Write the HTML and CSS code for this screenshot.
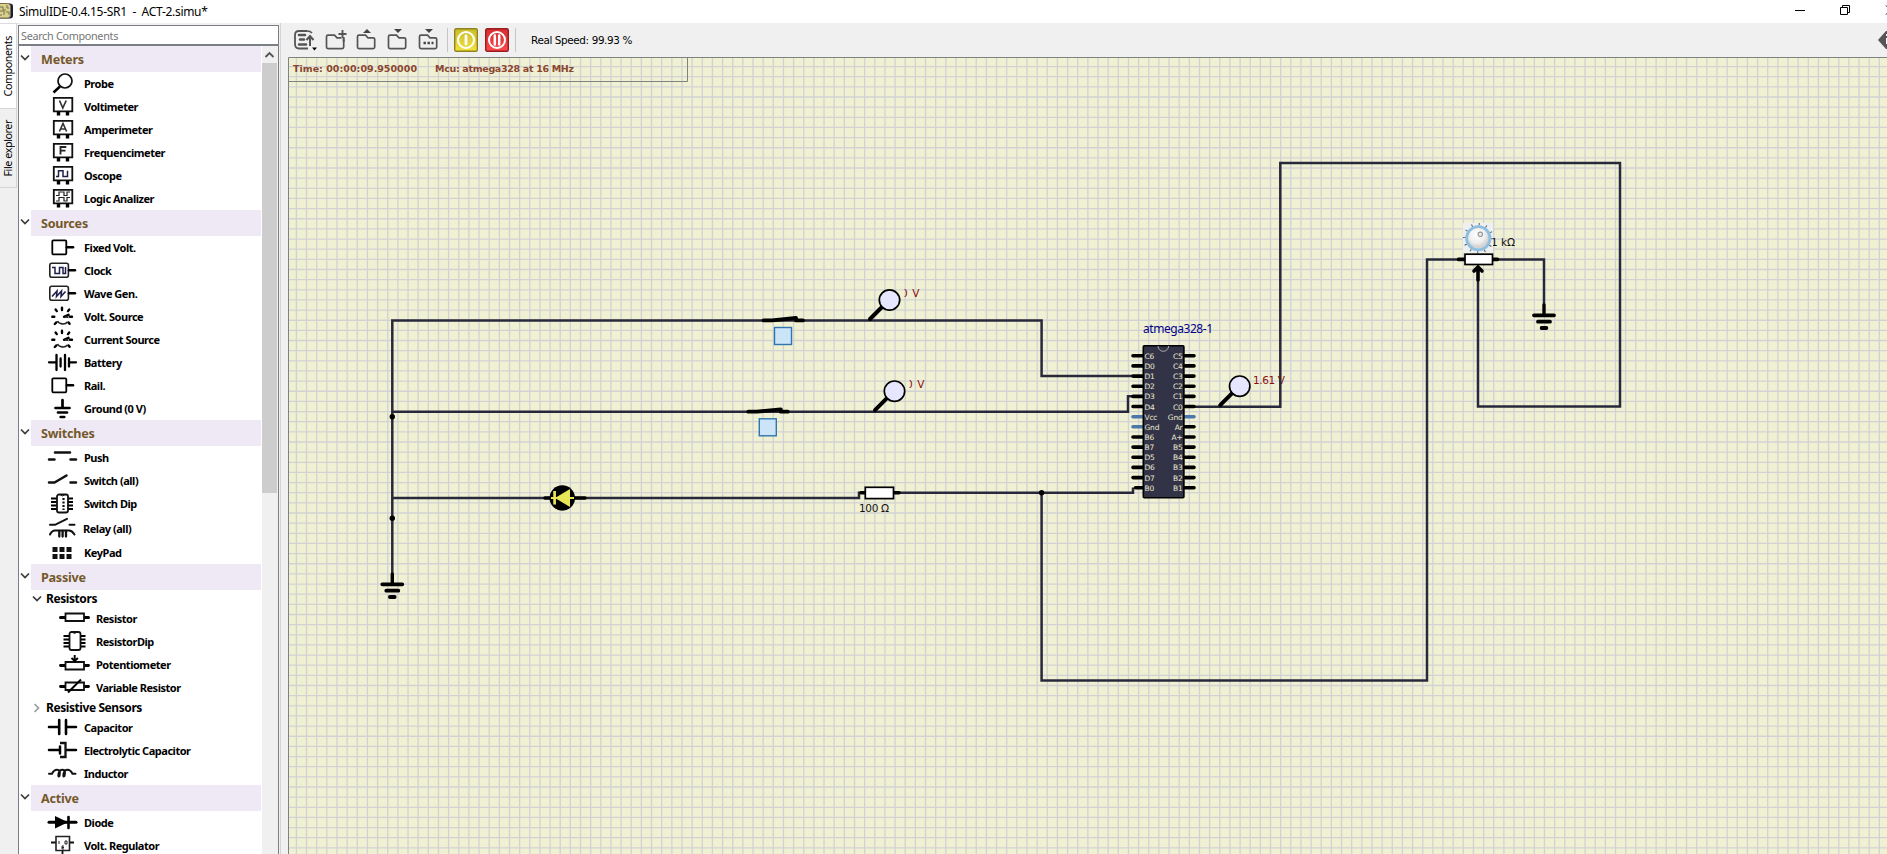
FILE: index.html
```html
<!DOCTYPE html>
<html lang="en">
<head>
<meta charset="utf-8">
<title>SimulIDE-0.4.15-SR1 - ACT-2.simu*</title>
<link rel="stylesheet" href="styles.css">
</head>
<body>
<svg class="defs" width="0" height="0">
  <defs>
    <symbol id="meter" viewBox="0 0 32 23"><path d="M6.8 2.8h18.5v13.6H6.8z" fill="#fff" stroke="#111" stroke-width="1.8"/><path d="M11.5 16.5v4M20.5 16.5v4" stroke="#000" stroke-width="3.4"/></symbol>
    <symbol id="box" viewBox="0 0 32 23"><rect x="5.3" y="4.3" width="14" height="14" rx="1" fill="#fff" stroke="#000" stroke-width="1.8"/><path d="M20 11.3h6" stroke="#000" stroke-width="2.6" stroke-linecap="round"/></symbol>
    <symbol id="widebox" viewBox="0 0 32 23"><rect x="2.8" y="4.3" width="18.6" height="14" rx="2" fill="#fff" stroke="#222" stroke-width="1.6"/><path d="M22 11.3h6" stroke="#000" stroke-width="2.4" stroke-linecap="round"/></symbol>
    <symbol id="dial" viewBox="0 0 32 23"><path d="M15 2.8v2.2M8.600 4.500l1.200 1.600M22.200 4.500l-1.200 1.600M5.300 11.800h2M23 11.800h2M7.800 19l1.600-1.600M22.600 18.800l-1.200-1.400M17 11.800l4.500-2" stroke="#000" stroke-width="2.400" stroke-linecap="round"/><path d="M10.500 16c1.600 3.400 7.500 4 10 1M18 11.600l3.500.8" fill="none" stroke="#222" stroke-width="1.600"/></symbol>
    <symbol id="down" viewBox="0 0 10 8"><path d="M1 1.5l4 4 4-4" fill="none" stroke="#3c3c3c" stroke-width="1.7"/></symbol>
    <symbol id="folder" viewBox="0 0 22 22"><path d="M4.5 6.2h5l2.5 2.6h5.2q1.5 0 1.5 1.5v7.8q0 1.5-1.5 1.5H3q-1.5 0-1.5-1.5V7.7q0-1.5 1.5-1.5z" fill="none" stroke="#555" stroke-width="1.7"/></symbol>
    <symbol id="ground" viewBox="0 0 28 28"><path d="M14 2v10" stroke="#000" stroke-width="3.4" stroke-linecap="round"/><path d="M4 12.3h20M8 18.7h12M11.6 25h4.8" stroke="#000" stroke-width="3.8" stroke-linecap="round"/></symbol>
    <linearGradient id="gold" x2="0" y2="1"><stop stop-color="#c9bd2c"/><stop offset="1" stop-color="#f3e33f"/></linearGradient>
    <linearGradient id="red" x2="0" y2="1"><stop stop-color="#d42d31"/><stop offset="1" stop-color="#fb4a4c"/></linearGradient>
    <radialGradient id="ball" cx=".45" cy=".35"><stop stop-color="#fff"/><stop offset=".7" stop-color="#eee"/><stop offset="1" stop-color="#d4d4d4"/></radialGradient>
  </defs>
</svg>

<header class="titlebar">
  <svg class="logo" width="14" height="16" viewBox="0 0 14 16"><rect x="-5" y=".5" width="18" height="15" rx="3" fill="#1b1b42"/><rect x="-5" y=".5" width="15.5" height="14.5" rx="3" fill="#d9d090" stroke="#777044"/><path d="M0 4h3v3h3M0 8h4v4M7 2v3h2M0 12h2M6 9h3v3" fill="none" stroke="#77704a"/></svg>
  <span class="title">SimulIDE-0.4.15-SR1&nbsp; -&nbsp; ACT-2.simu*</span>
  <svg class="window-buttons" width="92" height="23" viewBox="0 0 92 23"><path d="M0 10.5h10M45.500 7.500h7v7h-7zM47.500 7.500v-2h7v7h-2M91 5.500l8 8M91 14.500l6-6" fill="none" stroke="#000"/></svg>
</header>

<div class="workspace">
  <nav class="tabs">
    <div class="tab active"><span>Components</span></div>
    <div class="tab"><span>File explorer</span></div>
  </nav>

  <aside class="sidebar">
    <div class="search">Search Components</div>
    <div class="panel">
      <div class="tree">
        <div class="section"><svg class="arrow"><use href="#down"/></svg><h2>Meters</h2></div>
        <div class="item"><svg class="icon"><circle cx="18" cy="9" r="7" fill="#fff" stroke="#111" stroke-width="1.7"/><path d="M13 14.500l-6.500 6" stroke="#000" stroke-width="2.600"/></svg>Probe</div>
        <div class="item"><svg class="icon"><use href="#meter"/><path d="M12.500 5.500l3.300 7.500 3.400-7.500" fill="none" stroke="#333" stroke-width="1.700"/></svg>Voltimeter</div>
        <div class="item"><svg class="icon"><use href="#meter"/><path d="M12.400 13.500l3.600-8 3.600 8M13.700 11h4.700" fill="none" stroke="#333" stroke-width="1.600"/></svg>Amperimeter</div>
        <div class="item"><svg class="icon"><use href="#meter"/><path d="M13.500 13.500V6h5.800M13.500 9.600h5" fill="none" stroke="#222" stroke-width="1.800"/></svg>Frequencimeter</div>
        <div class="item"><svg class="icon"><use href="#meter"/><path d="M9 12.500h2.500V6.700h4.500v5.800h4.500V6.700" fill="none" stroke="#1f1f4c" stroke-width="1.500"/></svg>Oscope</div>
        <div class="item"><svg class="icon"><use href="#meter"/><path d="M9 8.500h3V5h5v3.500h3V5h3M9 14h3v-3.500h5V14h3v-3.500h3" fill="none" stroke="#222" stroke-width="1.200"/></svg>Logic Analizer</div>

        <div class="section"><svg class="arrow"><use href="#down"/></svg><h2>Sources</h2></div>
        <div class="item"><svg class="icon"><use href="#box"/></svg>Fixed Volt.</div>
        <div class="item"><svg class="icon"><use href="#widebox"/><path d="M5 8.500h3v6h4.500v-6H16v6h2.500V8" fill="none" stroke="#1f1f4c" stroke-width="1.500"/></svg>Clock</div>
        <div class="item"><svg class="icon"><use href="#widebox"/><path d="M5 14.500l5-5.500-.5 5.500 5-5.500-.5 5.500 4.500-5" fill="none" stroke="#1f1f4c" stroke-width="1.600"/></svg>Wave Gen.</div>
        <div class="item"><svg class="icon"><use href="#dial"/></svg>Volt. Source</div>
        <div class="item"><svg class="icon"><use href="#dial"/></svg>Current Source</div>
        <div class="item"><svg class="icon"><path d="M2 11.300h7M22 11.300h7M9.500 4v15M13.600 7.500v8M18 4v15M22 7.500v8" stroke="#000" stroke-width="2.300" stroke-linecap="round"/></svg>Battery</div>
        <div class="item"><svg class="icon"><use href="#box"/></svg>Rail.</div>
        <div class="item"><svg class="icon"><path d="M15.500 3v7M8.500 11h14M11 15.500h9M13.700 20h3.500" stroke="#000" stroke-width="2.700" stroke-linecap="round"/></svg>Ground (0 V)</div>

        <div class="section"><svg class="arrow"><use href="#down"/></svg><h2>Switches</h2></div>
        <div class="item"><svg class="icon"><path d="M8 6.500h15M2 13.500h5.500M23.500 13.500h5.500" stroke="#111" stroke-width="2.500" stroke-linecap="round"/></svg>Push</div>
        <div class="item"><svg class="icon"><path d="M2 13.500h5.500l12-7M23.500 13.500h5.500" fill="none" stroke="#111" stroke-width="2.500" stroke-linecap="round"/></svg>Switch (all)</div>
        <div class="item"><svg class="icon"><path d="M4 6.500h6M4 10h6M4 13.500h6M4 17h6M21 6.500h5M21 10h5M21 13.500h5M21 17h5" stroke="#000" stroke-width="1.900"/><rect x="10" y="2.500" width="11" height="18" rx="2" fill="#fff" stroke="#111" stroke-width="1.800"/><path d="M13 2.500q2.500 3 5 0" fill="none" stroke="#111"/><path d="M16.500 6v12" stroke="#111" stroke-width="2.200" stroke-dasharray="2 1.500"/></svg>Switch Dip</div>
        <div class="item relay"><svg class="icon relay-icon"><path d="M3 9.800h5l12-6M22.500 9.800h5M3 19.500q2-4 5-4h14q3 0 5.500 4" fill="none" stroke="#111" stroke-width="2" stroke-linecap="round"/><path d="M12.300 16v5.500M15.600 16v5.500M19 16v5.500" stroke="#111" stroke-width="2.300" stroke-linecap="round"/></svg>Relay (all)</div>
        <div class="item keypad"><svg class="icon"><path d="M5.500 7.500h20M5.500 14.500h20" stroke="#111" stroke-width="5" stroke-dasharray="5 2"/></svg>KeyPad</div>

        <div class="section"><svg class="arrow"><use href="#down"/></svg><h2>Passive</h2></div>
        <div class="subsection"><svg class="arrow"><use href="#down"/></svg>Resistors</div>
        <div class="item nested"><svg class="icon"><path d="M1.500 10.500h28" stroke="#000" stroke-width="3" stroke-linecap="round"/><path d="M6.500 6.500h18.500v7.500H6.500z" fill="#fff" stroke="#111" stroke-width="1.800"/></svg>Resistor</div>
        <div class="item nested"><svg class="icon"><path d="M4.500 6h6M4.500 9.500h6M4.500 13h6M4.500 16.500h6M21.500 6h5M21.500 9.500h5M21.500 13h5M21.500 16.500h5" stroke="#000" stroke-width="1.900"/><rect x="10.500" y="2" width="11" height="18" rx="2" fill="#fff" stroke="#111" stroke-width="1.800"/><path d="M13 2q2.500 3 5 0" fill="none" stroke="#111"/></svg>ResistorDip</div>
        <div class="item nested"><svg class="icon"><path d="M1.500 12.500h28" stroke="#000" stroke-width="2.800" stroke-linecap="round"/><path d="M6.500 9h18.500v7.500H6.500z" fill="#fff" stroke="#111" stroke-width="1.800"/><path d="M15.700 2v5.500M12.500 5l3.200 3 3.200-3" fill="none" stroke="#000" stroke-width="1.900"/></svg>Potentiometer</div>
        <div class="item nested"><svg class="icon"><path d="M1.500 10.500h28" stroke="#000" stroke-width="2.800" stroke-linecap="round"/><path d="M6.500 6.500h18.500v7.500H6.500z" fill="#fff" stroke="#111" stroke-width="1.800"/><path d="M9 16.500L22 3.500" stroke="#000" stroke-width="2"/></svg>Variable Resistor</div>
        <div class="subsection"><svg class="arrow closed"><use href="#down"/></svg>Resistive Sensors</div>
        <div class="item"><svg class="icon"><path d="M2 11h10M20 11h9M12.200 4v14M19 4v14" stroke="#000" stroke-width="2.600" stroke-linecap="round"/></svg>Capacitor</div>
        <div class="item"><svg class="icon"><path d="M2 11h10M19.500 11H29M13 7.500v7" stroke="#000" stroke-width="2.500" stroke-linecap="round"/><path d="M13 4h5.500v14H13" fill="none" stroke="#111" stroke-width="2.300"/></svg>Electrolytic Capacitor</div>
        <div class="item"><svg class="icon"><path d="M2 11.800h3q2-4 5-4 4 0 2.500 6-1.500 2-1-2 1-4 4-4 3.500 0 2 6-1.500 2-1-2 1-4 4-4 3 0 5 4h3" fill="none" stroke="#111" stroke-width="2" stroke-linecap="round"/></svg>Inductor</div>

        <div class="section"><svg class="arrow"><use href="#down"/></svg><h2>Active</h2></div>
        <div class="item"><svg class="icon"><path d="M2 11.300h27" stroke="#000" stroke-width="3" stroke-linecap="round"/><path d="M8 5l13 6.300L8 17.600z"/><path d="M21.500 6v11" stroke="#000" stroke-width="2.600" stroke-linecap="round"/></svg>Diode</div>
        <div class="item"><svg class="icon"><path d="M4 8.500h5M22 8.500h5M15.500 17v6" stroke="#111" stroke-width="1.800"/><path d="M9 2.500h13.500v14H9z" fill="#fff" stroke="#222" stroke-width="1.600"/><path d="M12 7v3M18 7h2v3h-2zM17 12h-2v3h2M15 13.500h2" fill="none" stroke="#222"/></svg>Volt. Regulator</div>
      </div>
      <div class="scrollbar"><svg class="scroll-up" viewBox="0 0 15 17"><path d="M3.500 11L7.500 7l4 4" fill="none" stroke="#555" stroke-width="1.800"/></svg><div class="thumb"></div></div>
    </div>
  </aside>

  <main class="editor">
    <div class="toolbar">
      <svg class="tool" viewBox="0 0 22 22"><path d="M13 2H5Q1 2 1 6v9q0 4.500 4 4.500h9" fill="none" stroke="#555" stroke-width="1.800"/><path d="M13 2q3.500 0 5 2" fill="none" stroke="#555" stroke-width="1.500"/><path d="M5 6h6M6 10.500h4M5 15.500h7" stroke="#555" stroke-width="2.600" stroke-linecap="round"/><path d="M16 17V8M12.500 11L16 7l3.500 4" fill="none" stroke="#555" stroke-width="2"/><path d="M18 18.500h5l-2.500 3z"/></svg>
      <svg class="tool" viewBox="0 0 22 22"><use href="#folder"/><path d="M12 0h10v10H17z" fill="#f0f0f0"/><path d="M17.500 1v8M13.500 5h8M18.700 8v5" stroke="#555" stroke-width="1.900"/></svg>
      <svg class="tool" viewBox="0 0 22 22"><use href="#folder"/><path d="M7 4l4-4 4 4z" fill="#444"/></svg>
      <svg class="tool" viewBox="0 0 22 22"><use href="#folder"/><path d="M7 0h8l-4 4z" fill="#444"/></svg>
      <svg class="tool" viewBox="0 0 22 22"><use href="#folder"/><path d="M7 0h8l-4 4z" fill="#444"/><path d="M5.500 14h10" stroke="#444" stroke-width="2.400" stroke-dasharray="2.400 1.600"/></svg>
      <i class="divider"></i>
      <svg class="power" viewBox="0 0 24 24"><rect x=".7" y=".7" width="22.600" height="22.600" rx="1.500" fill="url(#gold)" stroke="#8f8420" stroke-width="1.400"/><circle cx="12" cy="12" r="8" fill="none" stroke="#fff" stroke-width="2"/><path d="M12 8v8" stroke="#fff" stroke-width="2.800" stroke-linecap="round"/></svg>
      <svg class="power" viewBox="0 0 24 24"><rect x=".7" y=".7" width="22.600" height="22.600" rx="1.500" fill="url(#red)" stroke="#991c20" stroke-width="1.400"/><circle cx="12" cy="12" r="8" fill="none" stroke="#fff" stroke-width="2"/><path d="M9.800 7.500v9M14.200 7.500v9" stroke="#fff" stroke-width="2.500" stroke-linecap="round"/></svg>
      <i class="divider last"></i>
      <span class="speed">Real Speed: 99.93 %</span>
      <svg class="info" width="9" height="20" viewBox="0 0 9 20"><path d="M0 10l8-9h1v18H8z" fill="#555"/><path d="M8.500 4v2M8.500 8v6" stroke="#fff"/></svg>
    </div>

    <svg class="circuit" viewBox="288 57 1599 797">
      <rect x="288" y="57" width="1599" height="797" fill="#f0f0d2"/>
      <!-- one very wide dashed stroke per direction draws the grid -->
      <g stroke="#d2d2d5" fill="none">
        <path d="M286.900 455.500H1900" stroke-width="800" stroke-dasharray="1.300 8.847" stroke-dashoffset="1.300"/>
        <path d="M1087.500 65.900V860" stroke-width="1600" stroke-dasharray="1.300 8.847"/>
      </g>
      <path d="M288.500 854V57.500H1887M288 81.500H687.500V57" fill="none" stroke="#7d8480"/>
      <g class="status"><text x="293" y="72" textLength="124">Time: 00:00:09.950000</text><text x="435" y="72" textLength="139">Mcu: atmega328 at 16 MHz</text></g>

      <clipPath id="reading"><path d="M904.500 280h30v25h-30z"/></clipPath>
      <g class="label red"><g id="zero" clip-path="url(#reading)"><text x="901" y="297" textLength="18.500">0 V</text></g><use href="#zero" x="5" y="91.200"/><text x="1253" y="383.500" textLength="32">1.61 V</text></g>

      <g class="wires">
        <path d="M392.300 575V320.400H1041.600V376H1132M392.300 411.800H1128V396.300H1132M392.300 498H859V492.800H1133V487.500M1041.600 492.800V680.500H1427V259.400H1544V305M1195 406.700H1280.300V163H1620V406.500H1478V280"/>
      </g>
      <g><circle cx="392.300" cy="416.700" r="2.700"/><circle cx="392.300" cy="518.300" r="2.700"/><circle cx="1041.600" cy="492.800" r="2.700"/></g>
      <use href="#ground" x="378.300" y="572" width="28" height="28"/>
      <use href="#ground" x="1530" y="303" width="28" height="28"/>

      <g id="switch1"><path d="M763.500 320.400h8.500l24-2.400v2.400h7" fill="none" stroke="#000" stroke-width="3.800" stroke-linecap="round" stroke-linejoin="round"/><rect x="774.500" y="327.500" width="17" height="17" fill="#cce4f7" stroke="#2f75b0" stroke-width="1.400"/></g>
      <use href="#switch1" x="-15.200" y="91.300"/>

      <g id="probe1"><path d="M882 307l-12 12" stroke="#000" stroke-width="4" stroke-linecap="round"/><circle cx="889.500" cy="300" r="10.200" fill="#e6e6ff" stroke="#000" stroke-width="1.700"/></g>
      <use href="#probe1" x="5" y="91.200"/>
      <use href="#probe1" x="350.200" y="86.200"/>

      <path d="M545 498h40" stroke="#000" stroke-width="3.600" stroke-linecap="round"/>
      <circle cx="562.300" cy="498" r="12.700"/>
      <path d="M551 498h23" stroke="#e8e557" stroke-width="2"/><path d="M570 489v18l-15-9z" fill="#e8e557"/><path d="M554.600 491v13.500" stroke="#e8e557" stroke-width="2.700"/>

      <path d="M861 492.800h38" stroke="#000" stroke-width="3.600" stroke-linecap="round"/><rect x="865.300" y="487.300" width="28.200" height="11.300" fill="#fff" stroke="#000" stroke-width="1.700"/>
      <g class="label"><text x="859" y="512" textLength="30">100 Ω</text><text x="1491" y="246" textLength="24">1 kΩ</text></g>

      <rect x="1463" y="223" width="30" height="30" fill="#eeefef"/>
      <circle cx="1478.300" cy="238.300" r="14" fill="none" stroke="#56616b" stroke-width="2.800" stroke-dasharray="1 6.330"/>
      <circle cx="1478.300" cy="238.300" r="11.700" fill="url(#ball)" stroke="#8fbfe0" stroke-width="2.800"/>
      <circle cx="1480.300" cy="234.300" r="2.200" fill="#eee" stroke="#999" stroke-width="1.200"/>
      <path d="M1458.500 259.400h39" stroke="#000" stroke-width="3.600" stroke-linecap="round"/><rect x="1465" y="254.200" width="27.500" height="10.300" fill="#fff" stroke="#000" stroke-width="1.700"/>
      <path d="M1478 280v-12M1474 271l4-4 4 4" fill="none" stroke="#000" stroke-width="3.600" stroke-linecap="round"/>

      <g stroke="#000" stroke-width="3.600" stroke-linecap="round">
        <path d="M1133 355.800h10M1133 365.900h10M1133 376.100h10M1133 386.200h10M1133 396.400h10M1133 406.500h10M1133 437h10M1133 447.100h10M1133 457.300h10M1133 467.400h10M1133 477.600h10M1135.500 487.700h8M1185 355.800h9M1185 365.900h9M1185 376.100h9M1185 386.200h9M1185 396.400h9M1185 406.500h9M1185 426.800h9M1185 437h9M1185 447.100h9M1185 457.300h9M1185 467.400h9M1185 477.600h9M1185 487.700h9"/>
        <path d="M1133 416.700h10M1133 426.800h10M1185 416.700h9" stroke="#4a78aa"/>
      </g>
      <rect x="1143.300" y="345.800" width="40.600" height="152" rx="1" fill="#333348" stroke="#000" stroke-width="1.600"/>
      <path d="M1158 346a5.300 5.300 0 0 0 10.600 0" fill="none" stroke="#aaa"/>
      <g class="pins">
        <text x="1144.500" y="358.500">C6</text><text x="1144.500" y="369">D0</text><text x="1144.500" y="379">D1</text><text x="1144.500" y="389">D2</text><text x="1144.500" y="399">D3</text><text x="1144.500" y="409.500">D4</text><text x="1144.500" y="419.500">Vcc</text><text x="1144.500" y="429.500">Gnd</text><text x="1144.500" y="440">B6</text><text x="1144.500" y="450">B7</text><text x="1144.500" y="460">D5</text><text x="1144.500" y="470">D6</text><text x="1144.500" y="480.500">D7</text><text x="1144.500" y="490.500">B0</text>
      </g>
      <g class="pins right">
        <text x="1182.500" y="358.500">C5</text><text x="1182.500" y="369">C4</text><text x="1182.500" y="379">C3</text><text x="1182.500" y="389">C2</text><text x="1182.500" y="399">C1</text><text x="1182.500" y="409.500">C0</text><text x="1182.500" y="419.500">Gnd</text><text x="1182.500" y="429.500">Ar</text><text x="1182.500" y="440">A+</text><text x="1182.500" y="450">B5</text><text x="1182.500" y="460">B4</text><text x="1182.500" y="470">B3</text><text x="1182.500" y="480.500">B2</text><text x="1182.500" y="490.500">B1</text>
      </g>
      <text class="chip-name" x="1143" y="333" textLength="70">atmega328-1</text>
    </svg>
  </main>
</div>
</body>
</html>
```
FILE: styles.css
```css
* { box-sizing: border-box; }
body {
  margin: 0;
  height: 854px;
  overflow: hidden;
  display: flex;
  flex-direction: column;
  background: #f0f0f0;
  color: #000;
  font-family: "Noto Sans", "Open Sans", sans-serif;
}
svg { display: block; flex: none; }
.defs { position: absolute; }

.titlebar { flex: none; height: 23px; display: flex; align-items: center; background: #fff; }
.logo { margin-bottom: 2px; }
.title { margin: 0 auto 0 5px; font-size: 12px; letter-spacing: -.3px; line-height: 23px; white-space: nowrap; }

.workspace { flex: 1; min-height: 0; display: flex; }
.tabs { width: 18px; flex: none; border-top: 1px solid #dcdcdc; }
.tab {
  width: 17px;
  height: 79px;
  display: flex;
  align-items: center;
  justify-content: center;
  border: solid #d5d5d5;
  border-width: 0 1px 1px 0;
  font-size: 10.700px;
  letter-spacing: -.4px;
}
.tab span { writing-mode: vertical-rl; transform: rotate(180deg); line-height: 15px; white-space: nowrap; }
.tab.active { height: 85px; background: #fff; }

.sidebar { width: 263px; flex: none; padding: 2px 1px 0 0; border-right: 1px solid #d4d4d4; display: flex; flex-direction: column; }
.search {
  height: 20px;
  flex: none;
  border: 1px solid #7a7f85;
  background: #fff;
  color: #767676;
  font-size: 10.800px;
  letter-spacing: -.3px;
  line-height: 19px;
  padding-left: 2px;
}
.panel { flex: 1; min-height: 0; display: flex; border: solid #7a7f85; border-width: 1px 1px 0; background: #fff; }
.tree { flex: 1; min-width: 0; overflow: hidden; }
.section { height: 26px; display: flex; align-items: center; gap: 1px; }
.arrow { width: 10px; height: 8px; margin: 0 0 3px 1px; }
.section h2 {
  width: 230px;
  height: 26px;
  margin: 0;
  padding: 1px 0 0 10px;
  background: #efe9f5;
  color: #75592b;
  font-size: 12.600px;
  letter-spacing: -.25px;
  line-height: 26px;
}
.item {
  height: 23px;
  padding-left: 28px;
  display: flex;
  gap: 5px;
  font-size: 11px;
  font-weight: 700;
  letter-spacing: -.47px;
  line-height: 24px;
  white-space: nowrap;
}
.icon { width: 32px; height: 23px; overflow: visible; }
.icon use { width: 32px; height: 23px; }
.nested { padding-left: 40px; }
.relay { height: 27px; line-height: 28px; gap: 4px; }
.relay-icon { height: 27px; }
.keypad { height: 22px; line-height: 22px; }
.subsection { height: 17px; padding-left: 12px; display: flex; align-items: center; gap: 4px; font-size: 12px; font-weight: 700; letter-spacing: -.42px; white-space: nowrap; }
.subsection .arrow { margin-bottom: 0; }
.closed { transform: rotate(-90deg); opacity: .5; }

.scrollbar { width: 16px; flex: none; background: #f0f0f0; }
.scroll-up { width: 15px; height: 17px; }
.thumb { width: 15px; height: 430px; background: #cdcdcd; }

.editor { flex: 1; min-width: 0; display: flex; flex-direction: column; }
.toolbar { height: 34px; flex: none; display: flex; align-items: center; padding-left: 13px; }
.tool { width: 22px; height: 22px; margin-right: 9px; overflow: visible; }
.divider { width: 1px; height: 24px; background: #c6c6c6; margin: 0 6px 0 -2px; }
.power { width: 24px; height: 24px; margin-right: 7px; }
.divider.last { margin: 0 15px 0 -1px; }
.speed { margin-right: auto; font: 10.400px "DejaVu Sans", sans-serif; letter-spacing: -.37px; white-space: nowrap; }
.circuit { width: 1599px; height: 797px; margin-left: 7px; }

.status { font: 700 9.500px "DejaVu Sans", sans-serif; fill: #8a452e; }
.wires { fill: none; stroke: #28283c; stroke-width: 2.500; }
.label { font: 10.500px "DejaVu Sans", sans-serif; fill: #111; }
.label.red { fill: #8b0b12; }
.pins { font: 7.500px "DejaVu Sans", sans-serif; fill: #ecebd0; letter-spacing: -.2px; }
.pins.right { text-anchor: end; }
.chip-name { font: 12px "Noto Sans", sans-serif; fill: #00008b; }
```
